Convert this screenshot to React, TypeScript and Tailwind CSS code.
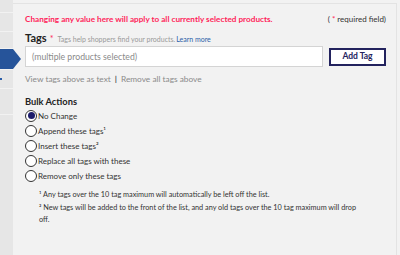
export default function App() {
  const options = [
    { label: "No Change", sup: "", checked: true },
    { label: "Append these tags", sup: "¹", checked: false },
    { label: "Insert these tags", sup: "²", checked: false },
    { label: "Replace all tags with these", sup: "", checked: false },
    { label: "Remove only these tags", sup: "", checked: false },
  ];

  return (
    <div className="w-[400px] h-[255px] flex bg-[#f2f2f2] overflow-hidden font-['Lato',sans-serif] text-[#333]">
      {/* left nav strip */}
      <div className="w-[13px] shrink-0 flex flex-col gap-px bg-[#f2f2f2]">
        <div className="h-[12px] bg-[#e6e6e6]" />
        <div className="h-[18px] bg-[#e6e6e6]" />
        <div className="h-[16px] bg-[#e6e6e6]" />
        <div className="relative h-[20px] bg-[#26549a]">
          <div className="absolute left-[13px] top-0 w-0 h-0 border-y-[10px] border-y-transparent border-l-[8px] border-l-[#26549a]" />
        </div>
        <div className="h-[18px] bg-[#e6e6e6] flex items-center">
          <span className="w-[2px] h-[2px] bg-[#2a5da8]" />
        </div>
        <div className="h-[25px] bg-[#e6e6e6]" />
        <div className="flex-1 bg-[#e6e6e6]" />
      </div>

      {/* main panel */}
      <div className="flex-1 mt-[3px] mr-[4px] border-t border-r border-[#e3e3e3] pl-[12px] pr-[10px]">
        <div className="flex justify-between items-center mt-[9px] h-[12px]">
          <p className="text-[8.2px] font-bold text-[#ff1f5a]">
            Changing any value here will apply to all currently selected products.
          </p>
          <p className="text-[8px] text-[#333]">
            ( <span className="text-[#ff1f5a]">*</span> required field)
          </p>
        </div>

        <div className="flex items-baseline mt-[5px] h-[14px]">
          <span className="text-[11px] font-bold text-[#222]">Tags</span>
          <span className="text-[9px] text-[#ff1f5a] ml-[3px] mr-[4px]">*</span>
          <span className="text-[7px] text-[#999]">Tags help shoppers find your products.</span>
          <span className="text-[7px] text-[#2a5da8] ml-[1px]">Learn more</span>
        </div>

        <div className="flex items-center gap-[6px] mt-[2px]">
          <div className="w-[298px] h-[21px] bg-white border border-[#d4d4d4] flex items-center pl-[6px]">
            <span className="text-[8.7px] text-[#8a8a8a]">(multiple products selected)</span>
          </div>
          <button className="w-[57px] h-[18px] bg-white border-2 border-[#23235e] text-[#23235e] text-[8.5px] font-bold flex items-center justify-center">
            Add Tag
          </button>
        </div>

        <div className="flex items-center mt-[6px] text-[8.3px] text-[#8a8a8a] h-[12px]">
          <span>View tags above as text</span>
          <span className="mx-[4px] text-[#555] font-bold">|</span>
          <span>Remove all tags above</span>
        </div>

        <p className="mt-[11px] text-[9.3px] font-bold text-[#222] h-[12px] leading-[12px]">Bulk Actions</p>

        <div className="flex flex-col">
          {options.map((o) => (
            <div key={o.label} className="flex items-center h-[15px]">
              <span className="w-[12px] h-[12px] rounded-full border border-[#333] bg-white flex items-center justify-center shrink-0">
                {o.checked && <span className="w-[7px] h-[7px] rounded-full bg-[#1c1c6b]" />}
              </span>
              <span className="ml-[1px] text-[8px] text-[#333] leading-[12px]">
                {o.label}
                {o.sup}
              </span>
            </div>
          ))}
        </div>

        <div className="mt-[6px] pl-[14px] text-[7.3px] text-[#333] leading-[12.5px]">
          <p>¹ Any tags over the 10 tag maximum will automatically be left off the list.</p>
          <p className="w-[325px]">
            ² New tags will be added to the front of the list, and any old tags over the 10 tag maximum will drop off.
          </p>
        </div>
      </div>
    </div>
  );
}
